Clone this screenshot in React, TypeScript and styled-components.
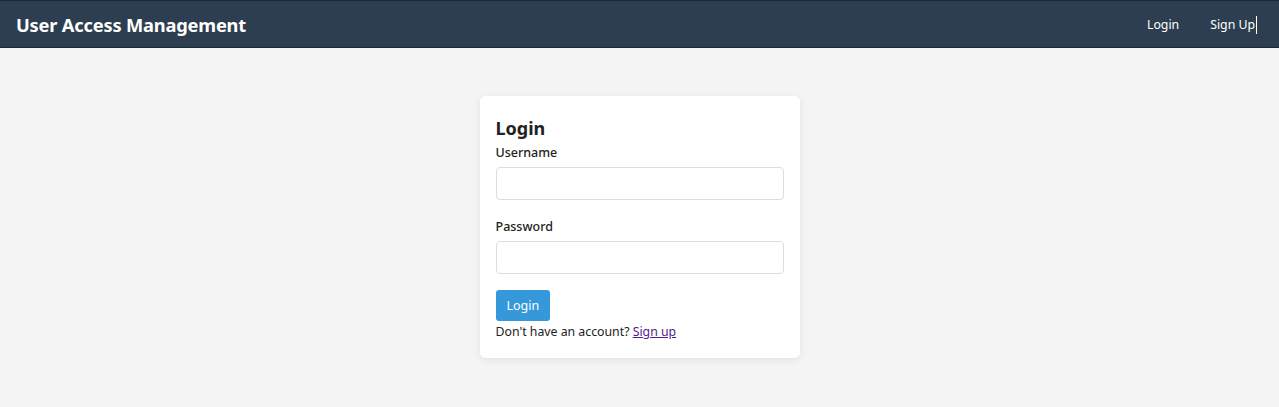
import styled, { createGlobalStyle } from 'styled-components';

const GlobalStyle = createGlobalStyle`
  body {
    margin: 0;
    background: #f4f4f4;
    font-family: "Noto Sans", "Open Sans", sans-serif;
    color: #222;
  }
`;

const Page = styled.div`
  min-height: 100vh;
`;

const Header = styled.header`
  height: 46px;
  background: #2c3e50;
  border-top: 1px solid #1c2836;
  border-bottom: 1px solid #1c2836;
  display: flex;
  align-items: center;
  justify-content: space-between;
  padding: 0 16px;
`;

const Brand = styled.h1`
  margin: 0;
  font-size: 18.3px;
  font-weight: 700;
  color: #fff;
  letter-spacing: -0.2px;
`;

const Nav = styled.nav`
  display: flex;
  gap: 31px;
  padding-right: 8px;
`;

const NavLink = styled.a<{ $caret?: boolean }>`
  position: relative;
  color: #fff;
  font-size: 12.3px;
  text-decoration: none;

  ${p => p.$caret && `
    &::after {
      content: '';
      position: absolute;
      right: -2px;
      top: 0;
      width: 1px;
      height: 18px;
      background: #fff;
    }
  `}
`;

const Main = styled.main`
  display: flex;
  justify-content: center;
  padding-top: 48px;
`;

const Card = styled.form`
  width: 288px;
  padding: 16px 16px 18px;
  background: #fff;
  border-radius: 6px;
  box-shadow: 0 2px 8px rgba(0, 0, 0, 0.08);
`;

const Title = styled.h2`
  margin: 4px 0 4px;
  font-size: 18px;
  font-weight: 700;
  color: #222;
`;

const Field = styled.div`
  display: flex;
  flex-direction: column;
  margin-bottom: 18px;

  &:last-of-type {
    margin-bottom: 16px;
  }
`;

const Label = styled.label`
  font-size: 12.5px;
  font-weight: 500;
  margin-bottom: 6px;
  color: #222;
`;

const Input = styled.input`
  box-sizing: border-box;
  height: 33px;
  width: 100%;
  border: 1px solid #ddd;
  border-radius: 4px;
  padding: 0 8px;
  font-family: inherit;
  font-size: 13px;
`;

const Button = styled.button`
  height: 31px;
  padding: 0 11px;
  border: none;
  border-radius: 3px;
  background: #3498db;
  color: #fff;
  font-family: inherit;
  font-size: 12.5px;
  cursor: pointer;
`;

const Footer = styled.p`
  margin: 2px 0 0;
  font-size: 12.3px;
  color: #222;

  a {
    color: #551a8b;
  }
`;

export default function App() {
  return (
    <Page>
      <GlobalStyle />
      <Header>
        <Brand>User Access Management</Brand>
        <Nav>
          <NavLink href="#">Login</NavLink>
          <NavLink href="#" $caret>Sign Up</NavLink>
        </Nav>
      </Header>
      <Main>
        <Card onSubmit={e => e.preventDefault()}>
          <Title>Login</Title>
          <Field>
            <Label htmlFor="username">Username</Label>
            <Input id="username" type="text" />
          </Field>
          <Field>
            <Label htmlFor="password">Password</Label>
            <Input id="password" type="password" />
          </Field>
          <Button type="submit">Login</Button>
          <Footer>
            Don't have an account? <a href="#">Sign up</a>
          </Footer>
        </Card>
      </Main>
    </Page>
  );
}
